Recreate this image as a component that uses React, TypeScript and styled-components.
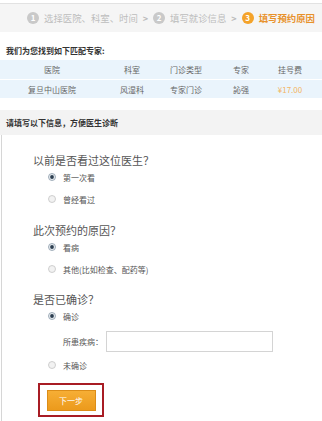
import React from "react";
import styled, { createGlobalStyle } from "styled-components";

const Global = createGlobalStyle`
  html, body { margin: 0; padding: 0; background: #fff; }
  body { font-family: "Noto Sans CJK SC", "Noto Sans", sans-serif; width: 322px; overflow: hidden; }
`;

const Page = styled.div`
  width: 322px;
  height: 421px;
  display: flex;
  flex-direction: column;
  overflow: hidden;
`;

const StepsBar = styled.div`
  margin-top: 3px;
  height: 28px;
  border-top: 1px solid #e2e2e2;
  background: #f5f5f5;
  display: flex;
  align-items: center;
  gap: 5px;
  padding-left: 27px;
  white-space: nowrap;
`;

const StepNum = styled.span<{ $active?: boolean }>`
  width: 12px;
  height: 12px;
  border-radius: 50%;
  flex: none;
  background: ${(p) => (p.$active ? "#f4a32a" : "#c9c9c9")};
  color: #fff;
  font-size: 8px;
  font-weight: bold;
  display: flex;
  align-items: center;
  justify-content: center;
  line-height: 1;
`;

const StepText = styled.span<{ $active?: boolean }>`
  font-size: 9.4px;
  color: ${(p) => (p.$active ? "#e8912a" : "#bdbdbd")};
  font-weight: ${(p) => (p.$active ? "bold" : "normal")};
`;

const StepArrow = styled.span`
  font-size: 9px;
  color: #bbb;
  font-weight: bold;
`;

const IntroTitle = styled.div`
  height: 28px;
  display: flex;
  align-items: flex-end;
  padding: 0 0 4px 6px;
  box-sizing: border-box;
  font-size: 8px;
  font-weight: bold;
  color: #333;
`;

const TableRow = styled.div<{ $h: number }>`
  display: grid;
  grid-template-columns: 104px 56px 52px 58px 40px 1fr;
  height: ${(p) => p.$h}px;
  background: #eaf4fc;
  align-items: center;
  border-bottom: 1px solid #fff;
`;

const Cell = styled.span<{ $price?: boolean }>`
  text-align: center;
  font-size: 8px;
  color: ${(p) => (p.$price ? "#f3b463" : "#666")};
`;

const SectionHead = styled.div`
  margin-top: 11px;
  height: 25px;
  background: #f3f3f3;
  display: flex;
  align-items: center;
  padding-left: 6px;
  font-size: 8px;
  font-weight: bold;
  color: #333;
`;

const Form = styled.div`
  flex: 1;
  margin-left: 1px;
  border-left: 1px solid #d6d6d6;
  padding: 19px 0 0 31px;
  display: flex;
  flex-direction: column;
`;

const Question = styled.div<{ $mt?: number }>`
  height: 12px;
  line-height: 12px;
  margin-top: ${(p) => p.$mt ?? 0}px;
  font-size: 11px;
  color: #555;
`;

const Option = styled.label<{ $mt?: number }>`
  height: 22px;
  margin-top: ${(p) => p.$mt ?? 0}px;
  margin-left: 15px;
  display: flex;
  align-items: center;
  gap: 7px;
  font-size: 8px;
  color: #555;
`;

const DiseaseRow = styled.div`
  margin-top: 4px;
  margin-left: 30px;
  height: 21px;
  display: flex;
  align-items: center;
  gap: 3px;
  font-size: 8px;
  color: #555;
`;

const DiseaseInput = styled.div`
  width: 167px;
  height: 21px;
  box-sizing: border-box;
  border: 1px solid #d4d4d4;
  background: #fff;
`;

const Highlight = styled.div`
  margin-top: 7px;
  margin-left: 5px;
  width: 66px;
  height: 34px;
  box-sizing: border-box;
  border: 2px solid #a81c24;
  display: flex;
  align-items: center;
  justify-content: center;
`;

const NextButton = styled.div`
  width: 49px;
  height: 21px;
  box-sizing: border-box;
  border: 1px solid #dc8d18;
  background: linear-gradient(#f6ae35, #ec9a1c);
  color: #fff;
  font-size: 8px;
  display: flex;
  align-items: center;
  justify-content: center;
`;

const Radio = ({ checked }: { checked?: boolean }) => (
  <svg width="8" height="8" viewBox="0 0 8 8">
    <circle cx="4" cy="4" r="3.5" fill={checked ? "#e9eef2" : "#f2f2f2"} stroke={checked ? "#8a9aa8" : "#c4c4c4"} strokeWidth="0.8" />
    {checked && <circle cx="4" cy="4" r="1.9" fill="#2c3e50" />}
  </svg>
);

export default function App() {
  return (
    <Page>
      <Global />
      <StepsBar>
        <StepNum>1</StepNum>
        <StepText>选择医院、科室、时间</StepText>
        <StepArrow>&gt;</StepArrow>
        <StepNum>2</StepNum>
        <StepText>填写就诊信息</StepText>
        <StepArrow>&gt;</StepArrow>
        <StepNum $active>3</StepNum>
        <StepText $active>填写预约原因</StepText>
      </StepsBar>
      <IntroTitle>我们为您找到如下匹配专家:</IntroTitle>
      <TableRow $h={19}>
        <Cell>医院</Cell>
        <Cell>科室</Cell>
        <Cell>门诊类型</Cell>
        <Cell>专家</Cell>
        <Cell>挂号费</Cell>
      </TableRow>
      <TableRow $h={18}>
        <Cell>复旦中山医院</Cell>
        <Cell>风湿科</Cell>
        <Cell>专家门诊</Cell>
        <Cell>訫强</Cell>
        <Cell $price>¥17.00</Cell>
      </TableRow>
      <SectionHead>请填写以下信息，方便医生诊断</SectionHead>
      <Form>
        <Question>以前是否看过这位医生？</Question>
        <Option><Radio checked />第一次看</Option>
        <Option><Radio />曾经看过</Option>
        <Question $mt={14}>此次预约的原因？</Question>
        <Option><Radio checked />看病</Option>
        <Option><Radio />其他(比如检查、配药等)</Option>
        <Question $mt={13}>是否已确诊？</Question>
        <Option><Radio checked />确诊</Option>
        <DiseaseRow>
          所患疾病：
          <DiseaseInput />
        </DiseaseRow>
        <Option $mt={2}><Radio />未确诊</Option>
        <Highlight>
          <NextButton>下一步</NextButton>
        </Highlight>
      </Form>
    </Page>
  );
}
